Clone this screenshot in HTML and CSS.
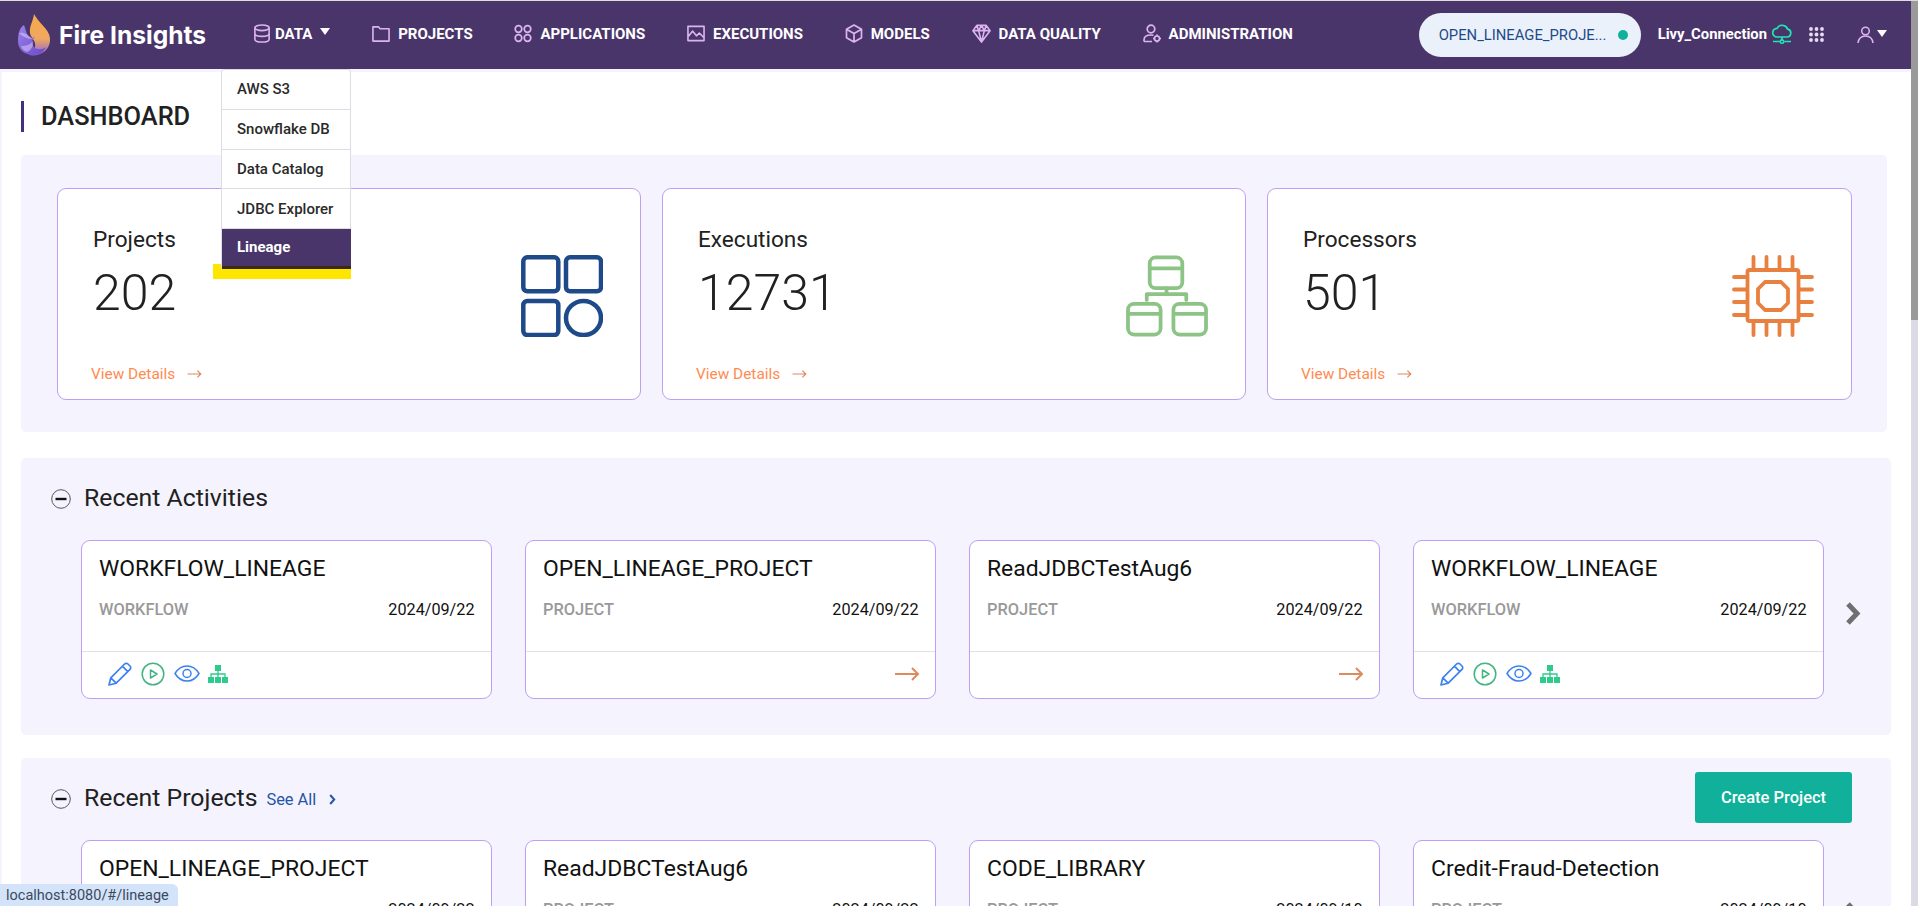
FILE: index.html
```html
<!DOCTYPE html>
<html lang="en">
<head>
<meta charset="utf-8">
<title>Fire Insights</title>
<link rel="stylesheet" href="styles.css">
</head>
<body>
<svg class="defs" width="0" height="0" aria-hidden="true">
  <symbol id="pencil" viewBox="0 0 24 24"><path d="M1 23l1.8-7.2L16.6 2a2.4 2.4 0 0 1 3.4 0l2 2a2.4 2.4 0 0 1 0 3.4L8.2 21.2zM14.4 4.2l5.4 5.4M2.8 15.8l5.4 5.4" fill="none" stroke="currentColor" stroke-width="1.7" stroke-linejoin="round"/></symbol>
  <symbol id="play" viewBox="0 0 24 24"><circle cx="12" cy="12" r="10.8" fill="none" stroke="currentColor" stroke-width="1.5"/><path d="M9.5 8l6.5 4-6.5 4z" fill="none" stroke="currentColor" stroke-width="1.5" stroke-linejoin="round"/></symbol>
  <symbol id="eye" viewBox="0 0 26 17"><path d="M1 8.500C4 3.500 8 1 13 1s9 2.500 12 7.500C22 13.500 18 16 13 16S4 13.500 1 8.500z" fill="none" stroke="currentColor" stroke-width="1.5"/><circle cx="13" cy="8.500" r="4" fill="none" stroke="currentColor" stroke-width="1.5"/></symbol>
  <symbol id="org" viewBox="0 0 20 18"><path d="M7 0h6v6H7zM0 12h6v6H0zM7 12h6v6H7zM14 12h6v6h-6z" fill="currentColor"/><path d="M10 6v6M3 12V9h14v3" fill="none" stroke="currentColor" stroke-width="1.300"/></symbol>
  <symbol id="arrow" viewBox="0 0 26 14"><path d="M1 7h23M18 1l6 6-6 6" fill="none" stroke="currentColor" stroke-width="2"/></symbol>
  <symbol id="minus" viewBox="0 0 20 20"><circle cx="10" cy="10" r="9.300" fill="none" stroke="#55555f" stroke-width="1"/><path d="M4.500 10h11" stroke="#111" stroke-width="2.400"/></symbol>
</svg>

<header class="topbar">
  <div class="brand">
    <svg class="logo" viewBox="0 0 36 44" width="36" height="44" aria-hidden="true">
      <defs>
        <linearGradient id="fl" x1="0" y1="0" x2="0" y2="1"><stop offset="0" stop-color="#f7a94a"/><stop offset=".6" stop-color="#f0a860"/><stop offset="1" stop-color="#8a62d8"/></linearGradient>
        <linearGradient id="pu" x1="0" y1="0" x2="1" y2="1"><stop offset="0" stop-color="#9c84ec"/><stop offset="1" stop-color="#6a48c8"/></linearGradient>
      </defs>
      <path d="M18 1c-1 8-5 12-4 19 1 5 4 6 5 10 1 5-2 10-6 12 9 2 20-3 21-14C35 17 24 12 18 1z" fill="url(#fl)"/>
      <path d="M8 12C3 15 2 22 2 28c0 9 7 14 15 14 6 0 11-3 13-8-4 3-9 3-12 0-4-4-1-8 1-10-4 2-7 0-8-3-1-3-2-6-3-9z" fill="url(#pu)"/>
      <path d="M3 20c5-1 10 2 13 6-4 0-9-2-13-6zM5 33c5 0 9-1 12-5 1 5-2 9-6 11-3-1-5-3-6-6z" fill="#d8ccfa" opacity=".55"/>
    </svg>
    <span class="brand-name">Fire Insights</span>
  </div>
  <nav class="menu">
    <a class="item"><svg class="ico ico-tight" viewBox="0 0 18 20"><ellipse cx="9" cy="4" rx="7.500" ry="3"/><path d="M1.500 4v12c0 1.700 3.400 3 7.500 3s7.500-1.300 7.500-3V4M1.500 10c0 1.700 3.400 3 7.500 3s7.500-1.300 7.500-3"/></svg><span>DATA</span><i class="caret"></i></a>
    <a class="item"><svg class="ico" viewBox="0 0 19 19"><path d="M1 17.500V2.500h6l1.500 2H18v13z"/></svg><span>PROJECTS</span></a>
    <a class="item"><svg class="ico" viewBox="0 0 18 18"><circle cx="4.500" cy="4.500" r="3.300"/><circle cx="13.500" cy="4.500" r="3.300"/><circle cx="4.500" cy="13.500" r="3.300"/><circle cx="13.500" cy="13.500" r="3.300"/></svg><span>APPLICATIONS</span></a>
    <a class="item"><svg class="ico" viewBox="0 0 19 17"><path d="M1 1h17v15H1zM1 12l5-6 4 5 3-3 5 5"/></svg><span>EXECUTIONS</span></a>
    <a class="item"><svg class="ico" viewBox="0 0 18 19"><path d="M9 1l7.500 4.250v8.500L9 18l-7.500-4.250v-8.500zM1.500 5.250L9 9.500l7.500-4.250M9 9.500V18"/></svg><span>MODELS</span></a>
    <a class="item"><svg class="ico wide" viewBox="0 0 20 20"><path d="M5 1.500h10l4 5.500-9 12L1 7zM1 7h18M7 7l3 12 3-12M5 1.500L7 7l3-5.500L13 7l2-5.500"/></svg><span>DATA QUALITY</span></a>
    <a class="item"><svg class="ico" viewBox="0 0 18 19"><circle cx="8" cy="5" r="3.800"/><path d="M1 17.500v-1.500c0-3 2.500-5 7-5 1 0 1.800.1 2.500.3M1 17.500h8"/><circle cx="14" cy="14.500" r="2.500"/><path d="M14 10.500v1.500M14 17v1.500M10 14.500h1.500M16.500 14.500H18"/></svg><span>ADMINISTRATION</span></a>
  </nav>
  <div class="tools">
    <div class="project-pill"><span class="pill-text">OPEN_LINEAGE_PROJE...</span><i class="dot"></i></div>
    <span class="conn">Livy_Connection</span>
    <svg class="cloud" viewBox="0 0 20 20" aria-hidden="true"><path d="M5 13h10a4 4 0 0 0 .6-7.900A5.800 5.800 0 0 0 5 4.400 4.300 4.300 0 0 0 5 13zM10 13v4M1 17.500h6.800M12.200 17.500H19" fill="none" stroke="currentColor" stroke-width="1.700"/><circle cx="10" cy="17.500" r="1.800" fill="none" stroke="currentColor" stroke-width="1.400"/></svg>
    <svg class="grid-ico" viewBox="0 0 15 15" aria-hidden="true"><g fill="currentColor"><circle cx="2" cy="2" r="1.900"/><circle cx="7.500" cy="2" r="1.900"/><circle cx="13" cy="2" r="1.900"/><circle cx="2" cy="7.500" r="1.900"/><circle cx="7.500" cy="7.500" r="1.900"/><circle cx="13" cy="7.500" r="1.900"/><circle cx="2" cy="13" r="1.900"/><circle cx="7.500" cy="13" r="1.900"/><circle cx="13" cy="13" r="1.900"/></g></svg>
    <div class="user">
      <svg class="user-ico" viewBox="0 0 17 17" aria-hidden="true"><circle cx="8.500" cy="5" r="3.800" fill="none" stroke="currentColor" stroke-width="1.500"/><path d="M1 17c.6-4.500 3.500-7 7.500-7s6.900 2.500 7.500 7" fill="none" stroke="currentColor" stroke-width="1.500"/></svg>
      <i class="caret"></i>
    </div>
  </div>
</header>

<div class="dropdown">
  <a class="dd-item">AWS S3</a>
  <a class="dd-item">Snowflake DB</a>
  <a class="dd-item">Data Catalog</a>
  <a class="dd-item">JDBC Explorer</a>
  <a class="dd-item active">Lineage</a>
</div>
<div class="hilite"></div>

<main class="page">
  <h1 class="page-title">DASHBOARD</h1>

  <section class="panel stats">
    <article class="stat">
      <div class="stat-body">
        <div class="stat-label">Projects</div>
        <div class="stat-value">202</div>
        <a class="details">View Details <svg class="details-arrow"><use href="#arrow"/></svg></a>
      </div>
      <svg class="stat-ico tone-blue" viewBox="0 0 82 82" aria-hidden="true"><g fill="none" stroke="currentColor" stroke-width="4.500"><rect x="2.300" y="2.300" width="35" height="34" rx="4"/><rect x="45" y="2.300" width="35" height="34" rx="4"/><rect x="2.300" y="46" width="35" height="34" rx="4"/><ellipse cx="62.500" cy="63" rx="17.500" ry="17"/></g></svg>
    </article>
    <article class="stat">
      <div class="stat-body">
        <div class="stat-label">Executions</div>
        <div class="stat-value">12731</div>
        <a class="details">View Details <svg class="details-arrow"><use href="#arrow"/></svg></a>
      </div>
      <svg class="stat-ico tone-green" viewBox="0 0 83 82" aria-hidden="true"><g fill="none" stroke="currentColor" stroke-width="3.800" stroke-linejoin="round"><rect x="24" y="2" width="33" height="31" rx="6"/><path d="M24 13h33"/><rect x="2" y="49" width="33" height="31" rx="6"/><path d="M2 59h33"/><rect x="48" y="49" width="33" height="31" rx="6"/><path d="M48 59h33"/><path d="M41 33v6M21 45v-6h40v6" stroke-linecap="round"/></g></svg>
    </article>
    <article class="stat">
      <div class="stat-body">
        <div class="stat-label">Processors</div>
        <div class="stat-value">501</div>
        <a class="details">View Details <svg class="details-arrow"><use href="#arrow"/></svg></a>
      </div>
      <svg class="stat-ico tone-orange" viewBox="0 0 82 82" aria-hidden="true"><g fill="none" stroke="currentColor" stroke-width="3.800" stroke-linecap="round" stroke-linejoin="round"><rect x="15.500" y="15" width="51" height="51" rx="2"/><path d="M33 27h16l7 7v14l-7 7H33l-7-7V34z"/><path d="M21.500 2v13M34.500 2v13M47.500 2v13M60.500 2v13M21.500 67v13M34.500 67v13M47.500 67v13M60.500 67v13M2 22h13M2 34.500h13M2 47h13M2 60h13M67 22h13M67 34.500h13M67 47h13M67 60h13"/></g></svg>
    </article>
  </section>

  <section class="panel row-panel">
    <div class="panel-head">
      <svg class="minus"><use href="#minus"/></svg>
      <h2 class="panel-title">Recent Activities</h2>
    </div>
    <div class="row">
      <div class="cards">
        <article class="card">
          <div class="card-body">
            <h3 class="card-title">WORKFLOW_LINEAGE</h3>
            <div class="card-meta"><span class="kind">WORKFLOW</span><span class="date">2024/09/22</span></div>
          </div>
          <div class="card-foot actions">
            <svg class="a-pencil"><use href="#pencil"/></svg>
            <svg class="a-play"><use href="#play"/></svg>
            <svg class="a-eye"><use href="#eye"/></svg>
            <svg class="a-org"><use href="#org"/></svg>
          </div>
        </article>
        <article class="card">
          <div class="card-body">
            <h3 class="card-title">OPEN_LINEAGE_PROJECT</h3>
            <div class="card-meta"><span class="kind">PROJECT</span><span class="date">2024/09/22</span></div>
          </div>
          <div class="card-foot go"><svg class="go-arrow"><use href="#arrow"/></svg></div>
        </article>
        <article class="card">
          <div class="card-body">
            <h3 class="card-title">ReadJDBCTestAug6</h3>
            <div class="card-meta"><span class="kind">PROJECT</span><span class="date">2024/09/22</span></div>
          </div>
          <div class="card-foot go"><svg class="go-arrow"><use href="#arrow"/></svg></div>
        </article>
        <article class="card">
          <div class="card-body">
            <h3 class="card-title">WORKFLOW_LINEAGE</h3>
            <div class="card-meta"><span class="kind">WORKFLOW</span><span class="date">2024/09/22</span></div>
          </div>
          <div class="card-foot actions">
            <svg class="a-pencil"><use href="#pencil"/></svg>
            <svg class="a-play"><use href="#play"/></svg>
            <svg class="a-eye"><use href="#eye"/></svg>
            <svg class="a-org"><use href="#org"/></svg>
          </div>
        </article>
      </div>
      <svg class="next" viewBox="0 0 16 25" aria-hidden="true"><path d="M3 3l9 9.500-9 9.500" fill="none" stroke="#6f6f6f" stroke-width="5"/></svg>
    </div>
  </section>

  <section class="panel row-panel last">
    <div class="panel-head">
      <svg class="minus"><use href="#minus"/></svg>
      <h2 class="panel-title">Recent Projects</h2>
      <a class="see-all">See All</a>
      <svg class="see-chev" viewBox="0 0 7 11" aria-hidden="true"><path d="M1.200 1l4 4.500-4 4.500" fill="none" stroke="#2456a8" stroke-width="2"/></svg>
      <button class="create">Create Project</button>
    </div>
    <div class="row">
      <div class="cards">
        <article class="card">
          <div class="card-body">
            <h3 class="card-title">OPEN_LINEAGE_PROJECT</h3>
            <div class="card-meta"><span class="kind">PROJECT</span><span class="date">2024/09/22</span></div>
          </div>
        </article>
        <article class="card">
          <div class="card-body">
            <h3 class="card-title">ReadJDBCTestAug6</h3>
            <div class="card-meta"><span class="kind">PROJECT</span><span class="date">2024/09/22</span></div>
          </div>
        </article>
        <article class="card">
          <div class="card-body">
            <h3 class="card-title">CODE_LIBRARY</h3>
            <div class="card-meta"><span class="kind">PROJECT</span><span class="date">2024/09/10</span></div>
          </div>
        </article>
        <article class="card">
          <div class="card-body">
            <h3 class="card-title">Credit-Fraud-Detection</h3>
            <div class="card-meta"><span class="kind">PROJECT</span><span class="date">2024/09/10</span></div>
          </div>
        </article>
      </div>
      <svg class="next" viewBox="0 0 16 25" aria-hidden="true"><path d="M3 3l9 9.500-9 9.500" fill="none" stroke="#6f6f6f" stroke-width="5"/></svg>
    </div>
  </section>
</main>

<div class="status">localhost:8080/#/lineage</div>
<div class="scrollbar"><div class="thumb"></div></div>
</body>
</html>
```

FILE: styles.css
```css
* { box-sizing: border-box; }
html, body { margin: 0; height: 906px; overflow: hidden; }
body { font-family: Roboto, "Liberation Sans", sans-serif; background: #fff; color: #212121; position: relative; }
.defs { position: absolute; }
a { text-decoration: none; }

.topbar { height: 69px; border-top: 1px solid #dcdcdc; background: #4a356b; display: flex; align-items: center; padding-left: 16px; padding-right: 31px; }
.brand { display: flex; align-items: center; width: 237px; gap: 7px; margin-top: -1px; flex: none; }
.logo { flex: none; }
.brand-name { font-family: Inter, Roboto, sans-serif; font-weight: 700; font-size: 24.600px; color: #fff; white-space: nowrap; }
.menu { display: flex; align-items: center; gap: 41.800px; margin-top: -3px; }
.item { display: flex; align-items: center; gap: 8px; color: #fff; font-weight: 700; font-size: 15px; white-space: nowrap; }
.ico { width: 18px; height: 19px; flex: none; fill: none; stroke: #dcb4f0; stroke-width: 1.700; stroke-linejoin: round; }
.ico.wide { width: 19px; }
.ico-tight { margin-right: -4px; }
.caret { display: block; width: 0; height: 0; border-left: 5px solid transparent; border-right: 5px solid transparent; border-top: 7px solid #fff; }
.item .caret { margin-top: -4px; }
.tools { margin-left: auto; display: flex; align-items: center; margin-top: -2px; }
.project-pill { width: 222px; height: 44px; border-radius: 22px; background: #eaf1fa; display: flex; align-items: center; justify-content: space-between; padding: 0 13px 0 20px; margin-top: 2px; }
.pill-text { color: #1f4a8a; font-size: 14.800px; white-space: nowrap; }
.dot { width: 10px; height: 10px; border-radius: 50%; background: #10b09a; }
.conn { color: #fff; font-weight: 700; font-size: 14.800px; margin-left: 17px; }
.cloud { width: 20px; height: 20px; margin-left: 5px; color: #1de9b6; }
.grid-ico { width: 15px; height: 15px; margin-left: 17px; color: #e8dcf4; }
.user { display: flex; align-items: flex-start; margin-left: 33px; }
.user-ico { width: 17px; height: 17px; color: #dcb4f0; }
.user .caret { margin-left: 3px; margin-top: 4px; }

.dropdown { position: absolute; left: 221px; top: 69px; width: 130px; background: #fff; border: 1px solid #dcdce4; border-top-left-radius: 3px; border-top-right-radius: 3px; z-index: 5; }
.dd-item { display: flex; align-items: center; height: 39.800px; padding-left: 15px; font-size: 15px; font-weight: 500; color: #2a2a2a; border-bottom: 1px solid #dcdce4; white-space: nowrap; }
.dd-item.active { height: 39.500px; background: #4a356b; color: #fff; font-weight: 700; border-bottom: 3px solid #3a2a10; margin: 0 -1px -1px 0; }
.hilite { position: absolute; left: 213px; top: 264px; width: 138px; height: 15px; background: #ffe600; z-index: 4; }

.page { padding: 3px 0 0 19px; border-left: 2px solid #f5f3fe; background: linear-gradient(#f5f3fe 3px, #fff 3px); }
.page-title { margin: 29px 0 23px; height: 31px; border-left: 3px solid #43307e; padding-left: 17px; font-size: 25.400px; line-height: 31px; font-weight: 500; color: #212121; }

.panel { background: #f5f3fe; border-radius: 5px; }
.stats { width: 1866px; display: grid; grid-template-columns: 584px 584px 585px; gap: 21px; padding: 33px 35px 32px 36px; margin-bottom: 26px; }
.stat { position: relative; height: 212px; background: #fff; border: 1px solid #bd9ff5; border-radius: 9px; display: flex; justify-content: space-between; }
.stat-body { padding: 37px 0 0 35px; display: flex; flex-direction: column; }
.stat-label { font-size: 22.600px; line-height: 28px; font-weight: 400; color: #212121; }
.stat-value { font-size: 50px; line-height: 56px; font-weight: 300; margin-top: 11px; color: #212121; }
.details { display: flex; align-items: center; margin: 44px 0 0 -2px; color: #ff8a50; font-size: 15.400px; gap: 12px; }
.details-arrow { width: 15px; height: 10px; color: #d98a62; }
.stat-ico { width: 82px; height: 82px; margin: 66px 37px 0 0; }
.tone-blue { color: #1f4a8a; }
.tone-green { color: #8cc486; }
.tone-orange { color: #e88040; }

.row-panel { width: 1870px; padding: 0 0 36px 30px; margin-bottom: 23px; }
.panel-head { display: flex; align-items: center; height: 82px; }
.minus { width: 20px; height: 20px; flex: none; }
.panel-title { margin: -4px 0 0 13px; font-size: 24.800px; font-weight: 400; color: #212121; }
.row { display: flex; align-items: center; padding-left: 30px; }
.cards { display: grid; grid-template-columns: repeat(4, 411px); gap: 33px; }
.card { height: 159px; background: #fff; border: 1px solid #bd9ff5; border-radius: 9px; display: flex; flex-direction: column; }
.card-body { height: 111px; padding: 15px 16.500px 0 17px; border-bottom: 1px solid #e2e2e6; }
.card-title { margin: 0; font-size: 22.900px; line-height: 26px; font-weight: 400; color: #111; white-space: nowrap; }
.card-meta { display: flex; justify-content: space-between; align-items: center; margin-top: 18px; }
.kind { font-size: 16.400px; font-weight: 500; color: #999; }
.date { font-size: 16.200px; color: #111; }
.card-foot { flex: 1; display: flex; align-items: center; padding-bottom: 3px; }
.actions { padding-left: 26px; }
.a-pencil { width: 24px; height: 24px; color: #3b82f0; }
.a-play { width: 24px; height: 24px; color: #43b581; margin-left: 9px; }
.a-eye { width: 26px; height: 17px; color: #3b82f0; margin-left: 9px; }
.a-org { width: 20px; height: 18px; color: #2ecc8a; margin-left: 8px; }
.go { justify-content: flex-end; padding-right: 15px; }
.go-arrow { width: 26px; height: 14px; color: #dd8a5e; }
.next { width: 16px; height: 25px; margin: -12px 0 0 21px; flex: none; }

.last { margin-bottom: 0; }
.last .panel-head { padding-right: 39px; }
.see-all { margin-left: 9px; color: #2456a8; font-size: 16.400px; padding-top: 1px; }
.see-chev { width: 7px; height: 11px; margin-left: 13px; margin-top: 1px; }
.create { margin: -4px 0 0 auto; width: 157px; height: 51px; background: #10b09a; border: 0; border-radius: 3px; color: #fff; font-family: Roboto, sans-serif; font-weight: 500; font-size: 16.500px; }

.status { position: fixed; left: 0; bottom: 0; width: 178px; height: 22px; padding-left: 6px; line-height: 23px; background: #d3e3fa; border-top-right-radius: 6px; color: #3c4a5c; font-size: 14.500px; z-index: 9; white-space: nowrap; }
.scrollbar { position: fixed; top: 1px; right: 0; bottom: 0; width: 7px; background: #dcdae4; z-index: 8; }
.thumb { height: 319px; background: #9a9a9a; }
```
